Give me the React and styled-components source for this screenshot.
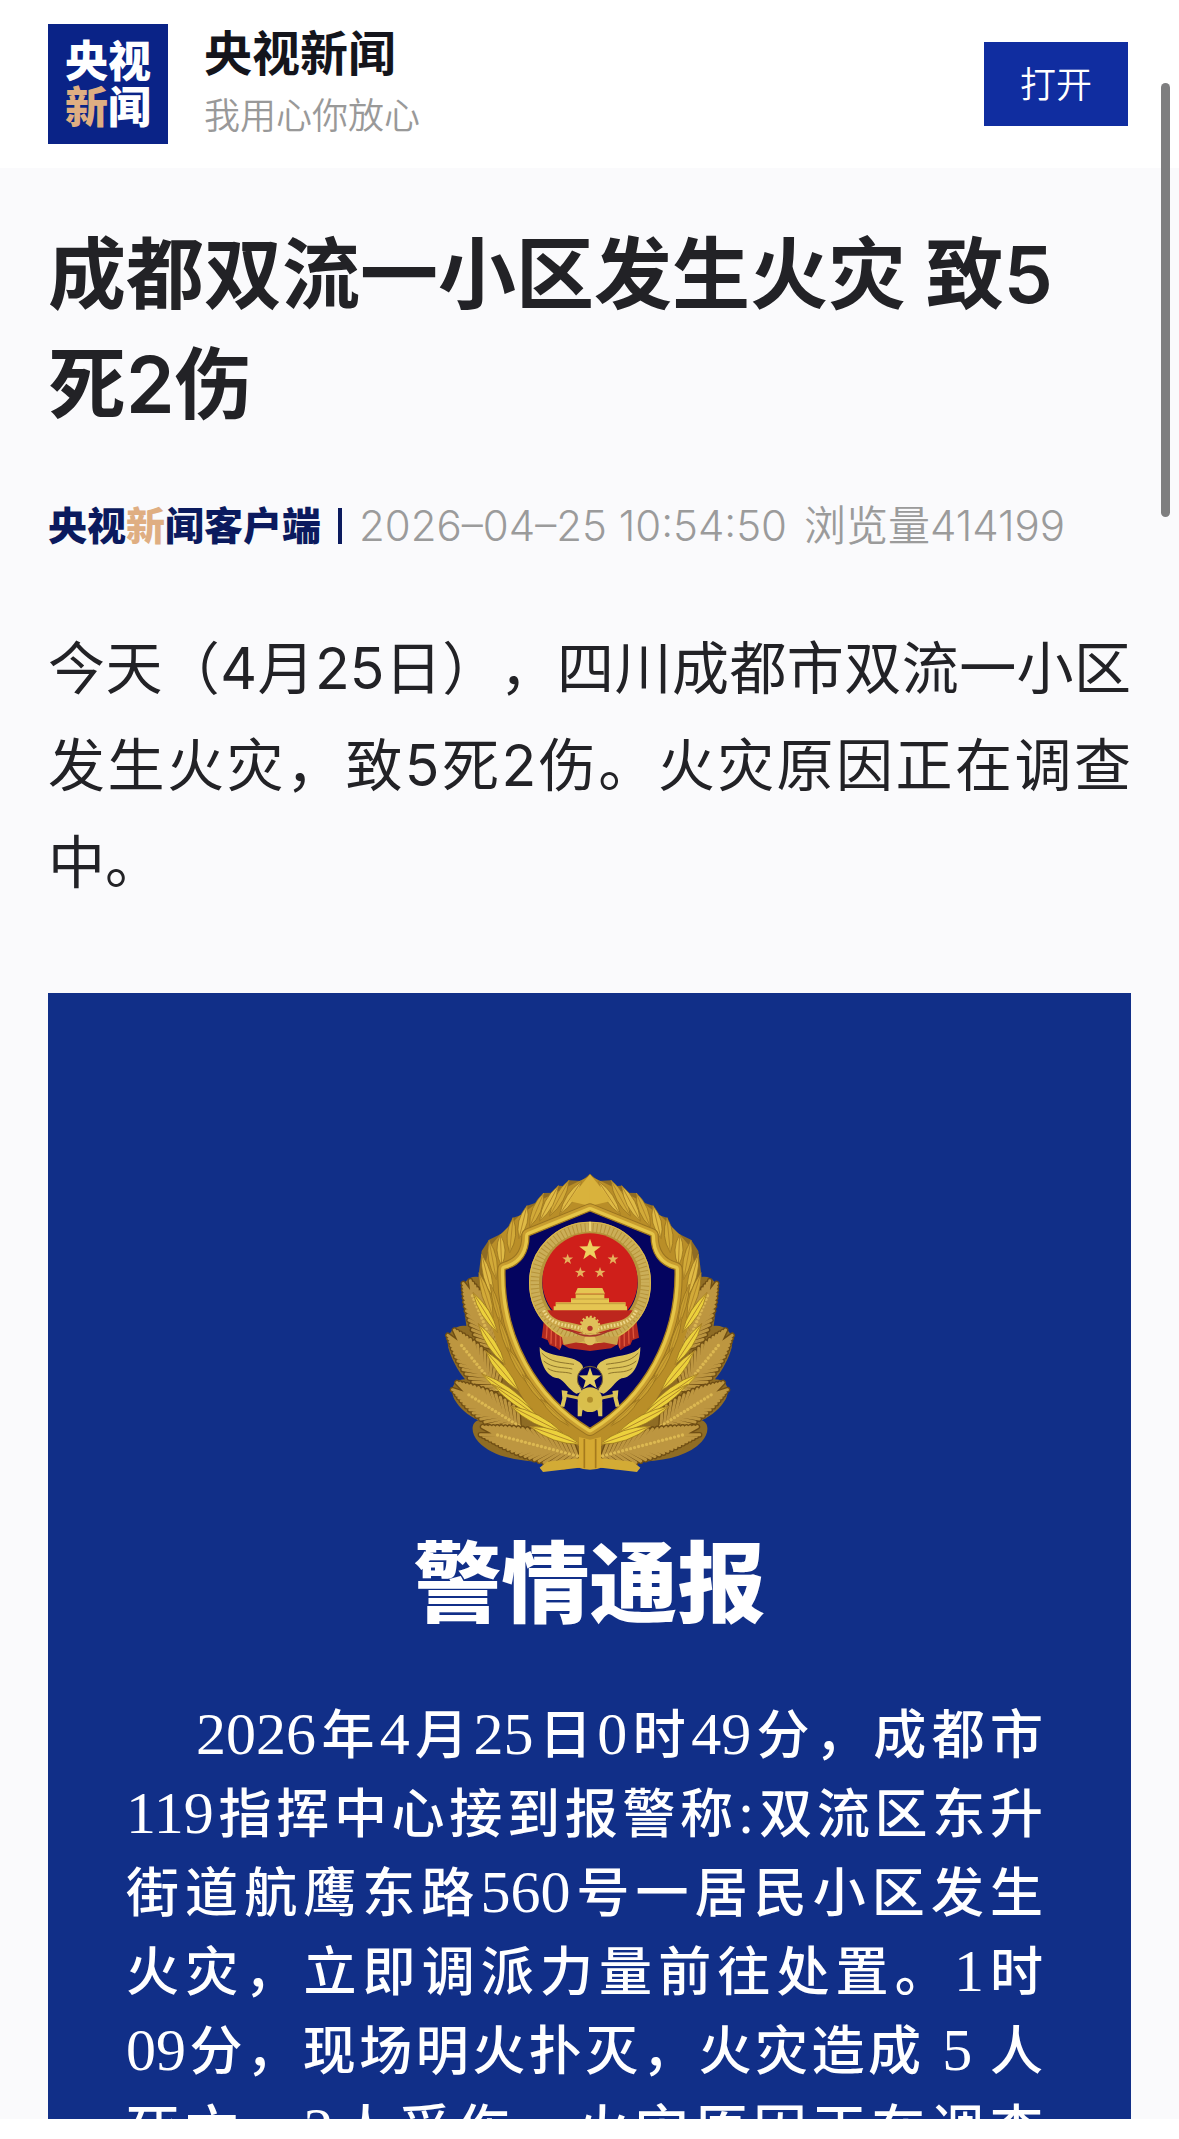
import React from 'react';
import styled, { createGlobalStyle } from 'styled-components';

const GlobalStyle = createGlobalStyle`
    * {
        box-sizing: border-box;
    }

    body {
        margin: 0;
        background: #fff;
        font-family: Inter, "Noto Sans CJK SC", sans-serif;
        color: #222226;
        text-spacing-trim: space-all;
    }
`

const noticeLines = [
    '2026年4月25日0时49分，成都市',
    '119指挥中心接到报警称:双流区东升',
    '街道航鹰东路560号一居民小区发生',
    '火灾，立即调派力量前往处置。1时',
    '09分，现场明火扑灭，火灾造成 5 人',
    '死亡，2人受伤。火灾原因正在调查',
];

// [tip x, tip y, base x, base y, half width]
const palms = [
    [130, 385, 215, 590, 48],
    [84, 542, 225, 715, 54],
    [92, 702, 290, 825, 54],
    [150, 832, 465, 915, 54],
];

const crownBlades = [
    [478, 90, 412, 190, 15],
    [440, 88, 382, 195, 16],
    [408, 104, 352, 210, 16],
    [364, 126, 322, 228, 16],
    [314, 164, 290, 262, 16],
    [272, 200, 262, 305, 16],
    [234, 250, 238, 345, 15],
    [200, 268, 222, 385, 15],
    [178, 310, 212, 440, 15],
    [170, 365, 212, 500, 15],
];

const innerBlades = [
    [152, 425, 226, 545, 15],
    [168, 518, 248, 640, 16],
    [190, 600, 290, 720, 17],
    [178, 668, 330, 775, 17],
    [210, 700, 350, 800, 14],
    [264, 765, 420, 845, 17],
    [322, 826, 475, 880, 18],
    [205, 400, 240, 530, 10],
    [228, 500, 268, 620, 10],
    [255, 590, 318, 700, 11],
    [300, 670, 375, 765, 11],
    [355, 745, 440, 825, 11],
];

function starPoints(cx, cy, r) {
    const points = [];
    for (let i = 0; i < 10; i++) {
        const radius = i % 2 ? r * 0.4 : r;
        const a = (Math.PI / 5) * i - Math.PI / 2;
        points.push((cx + radius * Math.cos(a)).toFixed(1) + ',' + (cy + radius * Math.sin(a)).toFixed(1));
    }
    return points.join(' ');
}

function bladePath([tx, ty, bx, by, w]) {
    const len = Math.hypot(bx - tx, by - ty);
    const nx = -(by - ty) / len * w;
    const ny = (bx - tx) / len * w;
    const mx = (tx + bx) / 2;
    const my = (ty + by) / 2;
    return `M${tx},${ty} Q${mx + nx * 1.6},${my + ny * 1.6} ${bx},${by} Q${mx - nx * 1.6},${my - ny * 1.6} ${tx},${ty}Z`;
}

function Blade({ leaf, fill }) {
    const [tx, ty, bx, by] = leaf;
    return (
        <g>
            <path d={bladePath(leaf)} fill={fill} stroke="#8d681a" strokeWidth="2" />
            <path d={`M${tx},${ty} L${bx},${by}`} stroke="#b3882a" strokeWidth="3" />
        </g>
    );
}

// a palm frond: ribs fanned out on both sides of a beaded spine
function Palm({ leaf }) {
    const [tx, ty, bx, by, w] = leaf;
    const len = Math.hypot(bx - tx, by - ty);
    const ux = (tx - bx) / len;
    const uy = (ty - by) / len;
    const count = Math.round(len / 16);
    const ribs = [];
    const beads = [];
    for (let i = 0; i <= count; i++) {
        const t = i / count;
        const x = bx + (tx - bx) * t * 0.76;
        const y = by + (ty - by) * t * 0.76;
        const spread = 0.95 - t * 0.7;
        const reach = w * (0.95 + 0.3 * Math.sin(Math.PI * t));
        [1, -1].forEach((side) => {
            const dx = ux * Math.cos(spread) - side * uy * Math.sin(spread);
            const dy = uy * Math.cos(spread) + side * ux * Math.sin(spread);
            ribs.push(`M${x},${y} L${x + dx * reach},${y + dy * reach}`);
        });
        beads.push(<circle key={i} cx={x} cy={y} r="5" fill="#dcb851" />);
    }
    return (
        <g>
            <path d={ribs.join(' ')} stroke="#6f4e14" strokeWidth="17" strokeLinecap="round" />
            <path d={ribs.join(' ')} stroke="#bd9640" strokeWidth="9" strokeLinecap="round" />
            {beads}
        </g>
    );
}

function WreathHalf() {
    return (
        <g fill="none">
            <path
                d="M503,68 L478,90 440,88 436,106 408,104 400,125 364,126 356,150 314,164 304,190 272,200 264,230 234,250 200,266 178,300 168,378 C140,372 118,395 120,430 L132,525 C98,520 70,545 78,590 C86,620 104,655 128,685 C92,685 82,715 96,745 C110,770 138,795 168,808 C144,815 146,850 168,872 C204,910 260,926 340,932 L470,950 503,950Z"
                fill="#8f6c24"
            />
            {palms.map((leaf, i) => <Palm key={i} leaf={leaf} />)}
            <path
                d="M503,75 L440,105 360,145 290,195 230,255 200,290 185,360 200,500 250,660 340,800 440,870 503,900Z"
                fill="#b98e28"
            />
            {crownBlades.map((leaf, i) => <Blade key={i} leaf={leaf} fill={i % 2 ? '#d2aa38' : '#dfba45'} />)}
            <path d="M503,70 L470,110 440,150 503,165Z" fill="#d9b23c" />
            {innerBlades.map((leaf, i) => <Blade key={i} leaf={leaf} fill={i > 6 ? '#c89f30' : '#ecd13c'} />)}
        </g>
    );
}

function WingHalf() {
    return (
        <g>
            <path
                d="M352,588 C370,612 412,612 446,622 C474,630 488,645 480,658 C462,672 466,694 480,722 L462,728 C438,716 428,690 408,682 C376,680 352,640 352,588Z"
                fill="#dcc45a"
            />
            <path
                d="M358,606 C385,636 420,634 455,640 M364,630 C390,652 420,648 450,654 M376,652 C400,668 425,660 448,668"
                fill="none" stroke="#8f762c" strokeWidth="3"
            />
            <path d="M482,744 L426,732 M484,768 L470,782" stroke="#d0b44c" strokeWidth="9" fill="none" />
            <path d="M418,718 L436,720 432,744 426,768 414,766 420,742Z" fill="#dcc45a" />
            <path d="M466,752 L482,762 478,796 466,796Z" fill="#dcc45a" />
        </g>
    );
}

function NationalEmblem() {
    const building = '#e5c552';
    return (
        <g>
            <path d="M368,480 L358,560 376,568 382,582 398,588 412,598 420,580 440,592 503,600 566,592 586,580 594,598 608,588 624,582 630,568 650,560 638,480Z" fill="#b32a1f" />
            <path
                d="M376,500 L372,562 M388,505 L386,578 M401,515 L400,586 M414,525 L414,590 M630,500 L634,562 M618,505 L620,578 M605,515 L606,586 M592,525 L592,590"
                stroke="#e0573b" strokeWidth="4"
            />
            <circle cx="503" cy="395" r="163" fill="none" stroke="#b6933a" strokeWidth="40" />
            <circle cx="503" cy="395" r="166" fill="none" stroke="#cbae58" strokeWidth="26" strokeDasharray="9 3" />
            <circle cx="503" cy="395" r="181" fill="none" stroke="#d9b850" strokeWidth="4" />
            <circle cx="503" cy="390" r="143" fill="#cf1f1a" />
            <path d="M368,478 H638 C620,530 570,548 503,548 C436,548 386,530 368,478Z" fill="#bd261d" />
            <path d="M503,212 V240" stroke="#f3dd7c" strokeWidth="5" />
            <polygon points={starPoints(503, 297, 34)} fill="#eed05f" />
            <polygon points={starPoints(436, 325, 17)} fill="#e6b15c" />
            <polygon points={starPoints(572, 325, 17)} fill="#e6b15c" />
            <polygon points={starPoints(474, 365, 17)} fill="#e6b15c" />
            <polygon points={starPoints(533, 365, 17)} fill="#e6b15c" />
            <path d="M466,411 H540 L548,428 H458Z" fill={building} />
            <path d="M460,430 H546 V442 H560 V456 H446 V442 H460Z" fill={building} />
            <path d="M400,454 H610 V466 H614 V478 H394 V466 H400Z" fill={building} />
            <path d="M460,430 H546 M448,444 H558 M400,458 H610" stroke="#b08a30" strokeWidth="2" />
            <path d="M364,478 C390,535 450,515 490,540 M642,478 C616,535 556,515 516,540" fill="none" stroke="#c9a548" strokeWidth="20" />
            <path d="M364,478 C390,535 450,515 490,540 M642,478 C616,535 556,515 516,540" fill="none" stroke="#edd68a" strokeWidth="10" strokeDasharray="5 5" />
            <circle cx="503" cy="525" r="26" fill="#e0c05a" stroke="#e0c05a" strokeWidth="10" strokeDasharray="6 5" />
            <circle cx="503" cy="532" r="8" fill="#b3362a" />
            <path d="M418,556 Q460,560 503,546 Q546,560 590,556 L584,582 Q546,574 503,566 Q460,574 424,582Z" fill="#c9a04a" />
            <circle cx="503" cy="566" r="17" fill="#dfbe5e" />
            <path d="M440,535 Q503,575 566,535" stroke="#a3342a" strokeWidth="5" fill="none" />
        </g>
    );
}

function FireEmblem() {
    const shield = 'M503,180 L320,254 C320,305 296,342 248,355 C243,560 345,735 503,832 C661,735 763,560 758,355 C710,342 686,305 686,254Z';
    return (
        <Emblem viewBox="68 66 870 900" role="img" aria-label="消防救援徽章">
            <WreathHalf />
            <g transform="translate(1006 0) scale(-1 1)">
                <WreathHalf />
            </g>
            <path d={shield} fill="none" stroke="#9a7420" strokeWidth="46" strokeLinejoin="round" />
            <path d={shield} fill="none" stroke="#c89d2f" strokeWidth="40" strokeLinejoin="round" />
            <path d={shield} fill="none" stroke="#e6c548" strokeWidth="24" strokeLinejoin="round" />
            <path d={shield} fill="#04045f" stroke="#a37a1d" strokeWidth="4" />
            <NationalEmblem />
            <WingHalf />
            <g transform="translate(1006 0) scale(-1 1)">
                <WingHalf />
            </g>
            <circle cx="503" cy="684" r="38" fill="#04045f" stroke="#80692c" strokeWidth="3" />
            <polygon points={starPoints(503, 684, 35)} fill="#e4cf62" />
            <circle cx="503" cy="746" r="37" fill="#d9bf4c" />
            <circle cx="503" cy="746" r="9" fill="#b18f2c" />
            <path d="M352,950 L374,932 L470,922 V950 L362,963Z M654,950 L632,932 L536,922 V950 L644,963Z" fill="#d3ab35" />
            <path d="M470,858 L503,866 536,858 V920 L544,948 Q503,964 462,948 L470,920Z" fill="#d5a932" />
            <path d="M486,864 V952 M520,864 V952" stroke="#a57a1d" strokeWidth="5" />
        </Emblem>
    );
}

// digits stand taller than the Chinese characters beside them
function NoticeText({ text }) {
    return text.split(/([0-9:]+)/).map((part, i) => (
        i % 2 ? <Digits key={i}>{part}</Digits> : part
    ));
}

export default function App() {
    return (
        <Page>
            <GlobalStyle />
            <Header>
                <Logo>
                    <span>央视</span>
                    <span><Accent>新</Accent>闻</span>
                </Logo>
                <Brand>
                    <BrandName>央视新闻</BrandName>
                    <Slogan>我用心你放心</Slogan>
                </Brand>
                <OpenButton type="button">打开</OpenButton>
            </Header>
            <Article>
                <Title>成都双流一小区发生火灾 致5死2伤</Title>
                <Meta>
                    <Source>央视<Accent>新</Accent>闻客户端</Source>
                    <Divider />
                    <time dateTime="2026-04-25T10:54:50">2026–04–25 10:54:50</time>
                    <span>浏览量414199</span>
                </Meta>
                <Lead>今天（4月25日），四川成都市双流一小区发生火灾，致5死2伤。火灾原因正在调查中。</Lead>
                <Notice>
                    <FireEmblem />
                    <NoticeTitle>警情通报</NoticeTitle>
                    <NoticeBody>
                        {noticeLines.map((line, i) => (
                            <NoticeLine key={i} $first={i === 0}>
                                <NoticeText text={line} />
                            </NoticeLine>
                        ))}
                    </NoticeBody>
                </Notice>
            </Article>
            <BottomBar />
            <ScrollThumb />
        </Page>
    );
}

const Page = styled.div`
    display: flex;
    flex-direction: column;
    height: 100vh;
    overflow: hidden;
    background: #fafafc;
`

const Header = styled.header`
    display: flex;
    align-items: center;
    flex: none;
    height: 168px;
    padding: 0 51px 0 48px;
    background: #fff;
`

const Logo = styled.div`
    display: flex;
    flex-direction: column;
    align-items: center;
    justify-content: center;
    width: 120px;
    height: 120px;
    background: #0a2387;
    color: #fff;
    font-size: 43px;
    font-weight: 900;
    line-height: 46px;
`

const Accent = styled.span`
    color: #dfae82;
`

const Brand = styled.div`
    flex: 1;
    margin-left: 36px;
    padding-top: 4px;
`

const BrandName = styled.div`
    color: #14151c;
    font-size: 48px;
    font-weight: 700;
    line-height: 60px;
`

const Slogan = styled.div`
    color: #999;
    font-size: 36px;
    font-weight: 350;
    line-height: 64px;
`

const OpenButton = styled.button`
    width: 144px;
    height: 84px;
    padding: 0 0 4px;
    border: 0;
    background: #102da0;
    color: #fff;
    font-family: inherit;
    font-size: 36px;
    font-weight: 350;
`

const Article = styled.main`
    display: flex;
    flex-direction: column;
    flex: 1;
    min-height: 0;
    padding: 52px 48px 0;
    overflow: hidden;
`

const Title = styled.h1`
    margin: 0;
    padding-right: 24px;
    font-size: 78px;
    font-weight: 600;
    line-height: 110px;
`

const Meta = styled.div`
    display: flex;
    align-items: center;
    margin-top: 50px;
    gap: 17px;
    color: #9b9b9b;
    font-size: 42px;
    font-weight: 350;
    line-height: 72px;
    white-space: nowrap;
`

const Source = styled.span`
    color: #0b1a5e;
    font-size: 39px;
    font-weight: 900;
`

const Divider = styled.span`
    width: 4px;
    height: 36px;
    background: #0b1a5e;
`

const Lead = styled.p`
    margin: 58px 0 82px;
    font-size: 57px;
    line-height: 97px;
    text-align: justify;
`

const Notice = styled.section`
    display: flex;
    flex-direction: column;
    align-items: center;
    flex: 1;
    min-height: 0;
    padding-top: 180px;
    background: #112f88;
    color: #fff;
    overflow: hidden;
`

const Emblem = styled.svg`
    flex: none;
    width: 290px;
    height: 300px;
`

const NoticeTitle = styled.h2`
    margin: 50px 0 52px;
    font-size: 88px;
    font-weight: 900;
    line-height: 120px;
`

const NoticeBody = styled.div`
    align-self: stretch;
    padding: 0 88px 0 78px;
    font-size: 53px;
    font-weight: 500;
`

const NoticeLine = styled.p`
    height: 79px;
    margin: 0;
    padding-left: ${(props) => (props.$first ? '70px' : '0')};
    line-height: 79px;
    text-align: justify;
    text-align-last: justify;
    white-space: nowrap;
`

const Digits = styled.span`
    font-family: "Liberation Serif", serif;
    font-size: 60px;
    font-weight: 400;
`

const BottomBar = styled.footer`
    flex: none;
    height: 20px;
    background: #fff;
`

const ScrollThumb = styled.div`
    position: fixed;
    top: 83px;
    right: 9px;
    width: 9px;
    height: 434px;
    border-radius: 5px;
    background: #7e7e7f;
`
